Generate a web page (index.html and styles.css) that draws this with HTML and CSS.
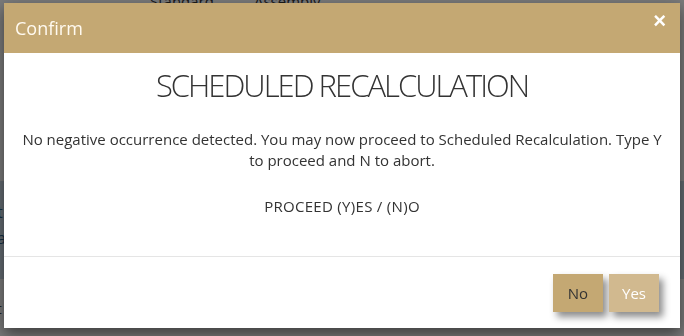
FILE: index.html
```html
<!DOCTYPE html>
<html lang="en">
<head>
    <meta charset="UTF-8">
    <meta name="viewport" content="width=device-width, initial-scale=1.0">
    <title>Confirm</title>
    <link rel="stylesheet" href="styles.css">
</head>
<body>
    <div class="page">
        <div class="tabs">
            <span class="tab">Standard</span>
            <span class="tab">Assembly</span>
        </div>
        <div class="panel">
            <p>at</p>
            <p>ea</p>
        </div>
        <div class="foot">
            <p>st</p>
        </div>
    </div>

    <div class="overlay">
        <div class="modal">
            <div class="modal-header">
                <h4>Confirm</h4>
                <button class="close">&times;</button>
            </div>
            <div class="modal-body">
                <h2>SCHEDULED RECALCULATION</h2>
                <p>No negative occurrence detected. You may now proceed to Scheduled Recalculation. Type Y to proceed and N to abort.</p>
                <p class="prompt">PROCEED (Y)ES / (N)O</p>
            </div>
            <div class="modal-footer">
                <button class="btn btn-no">No</button>
                <button class="btn btn-yes">Yes</button>
            </div>
        </div>
    </div>
</body>
</html>
```

FILE: styles.css
```css
body {
    font-family: 'Open Sans', 'Noto Sans', sans-serif;
    margin: 0;
    padding: 0;
    background-color: #f4f4f4;
    height: 336px;
    overflow: hidden;
}

.page {
    height: 100%;
}

.tabs {
    display: flex;
    gap: 40px;
    padding: 0 0 0 150px;
    margin-top: -9px;
    font-size: 15px;
    color: #333;
}

.panel {
    margin-top: 170px;
    height: 80px;
    padding: 18px 0 0 0;
    color: #2a5d86;
    font-size: 16px;
    background-color: #c6d6e2;
}

.panel p {
    margin: 0;
    padding: 2px 0;
    text-indent: -12px;
}

.foot {
    padding-top: 20px;
    color: #444;
    font-size: 14px;
}

.foot p {
    margin: 0;
    text-indent: -10px;
}

.overlay {
    position: fixed;
    top: 0;
    left: 0;
    right: 0;
    bottom: 0;
    background-color: rgba(0, 0, 0, 0.5);
}

.modal {
    margin: 3px 4px 0 4px;
    height: 325px;
    background-color: #fff;
    display: flex;
    flex-direction: column;
    box-shadow: 0 6px 14px rgba(0, 0, 0, 0.5);
}

.modal-header {
    background-color: #c4a873;
    height: 50px;
    display: flex;
    align-items: center;
    justify-content: space-between;
    padding: 0 14px 0 11px;
}

.modal-header h4 {
    margin: 0;
    font-size: 18px;
    font-weight: 400;
    color: #fffaf0;
}

.close {
    background: none;
    border: none;
    color: #fff;
    font-size: 22px;
    font-weight: bold;
    padding: 0;
    margin-top: -14px;
    cursor: pointer;
    font-family: 'Liberation Sans', sans-serif;
}

.modal-body {
    flex: 1;
    text-align: center;
    padding: 10px 18px 0 18px;
    color: #333;
    border-bottom: 1px solid #e5e5e5;
}

.modal-body h2 {
    margin: 0 0 22px 0;
    font-size: 31px;
    line-height: 44px;
    font-weight: 300;
    letter-spacing: -2px;
    color: #333;
}

.modal-body p {
    margin: 0;
    font-size: 15px;
    line-height: 21px;
}

.modal-body .prompt {
    margin-top: 25px;
    letter-spacing: 0.3px;
}

.modal-footer {
    height: 71px;
    display: flex;
    justify-content: flex-end;
    align-items: flex-start;
    gap: 6px;
    padding: 17px 21px 0 0;
    box-sizing: border-box;
}

.btn {
    width: 50px;
    height: 38px;
    border: none;
    font-family: 'Open Sans', sans-serif;
    font-size: 15px;
    cursor: pointer;
    box-shadow: 4px 5px 7px rgba(0, 0, 0, 0.45);
}

.btn-no {
    background-color: #c4a873;
    color: #333;
}

.btn-yes {
    background-color: #d1b98f;
    color: #fff;
}
```
